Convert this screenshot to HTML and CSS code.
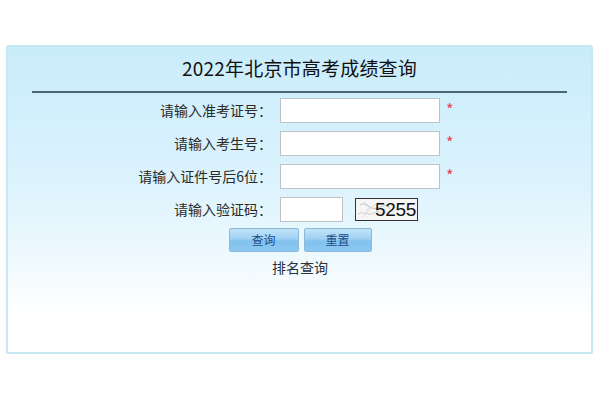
FILE: index.html
```html
<!DOCTYPE html>
<html lang="zh-CN">
<head>
<meta charset="utf-8">
<title>2022年北京市高考成绩查询</title>
<link rel="stylesheet" href="styles.css">
</head>
<body>
<div class="panel">
  <h1 class="title">2022年北京市高考成绩查询</h1>
  <div class="rule"></div>
  <form class="form">
    <div class="row">
      <label class="label">请输入准考证号：</label>
      <input class="field" type="text">
      <span class="star">*</span>
    </div>
    <div class="row">
      <label class="label">请输入考生号：</label>
      <input class="field" type="text">
      <span class="star">*</span>
    </div>
    <div class="row">
      <label class="label">请输入证件号后6位：</label>
      <input class="field" type="text">
      <span class="star">*</span>
    </div>
    <div class="row">
      <label class="label">请输入验证码：</label>
      <input class="field small" type="text">
      <div class="captcha">
        <svg class="noise" width="61" height="21" viewBox="0 0 61 21">
          <path d="M4 6 C10 2, 14 12, 22 9 S30 4, 34 10" fill="none" stroke="#c4c4c4" stroke-width="1"/>
          <path d="M2 15 C8 11, 12 18, 18 14 S26 17, 30 13" fill="none" stroke="#d0d0d0" stroke-width="1"/>
          <path d="M6 18 C12 13, 18 5, 24 3" fill="none" stroke="#d8d8d8" stroke-width="1"/>
          <path d="M8 3 L14 8 L10 12" fill="none" stroke="#c8c8c8" stroke-width="0.8"/>
        </svg>
        <span class="code">5255</span>
      </div>
    </div>
    <div class="buttons">
      <button class="btn" type="button">查询</button>
      <button class="btn narrow" type="button">重置</button>
    </div>
    <div class="rank"><a class="rank-link" href="#">排名查询</a></div>
  </form>
</div>
</body>
</html>
```
FILE: styles.css
```css
html, body {
  margin: 0;
  padding: 0;
  background: #ffffff;
}
body {
  font-family: "Noto Sans CJK SC", "Liberation Sans", sans-serif;
  color: #2a2a2a;
}
.panel {
  box-sizing: border-box;
  margin: 45px 0 0 6px;
  width: 587px;
  height: 309px;
  border: 2px solid #c6e9f1;
  border-radius: 3px;
  background: linear-gradient(to bottom, #c9ecfb 0%, #dcf3fd 45%, #f1fafe 72%, #ffffff 88%, #ffffff 100%);
  box-shadow: 0 1px 1px rgba(150, 210, 225, 0.5);
}
.title {
  margin: 9px 0 0 0;
  font-size: 19px;
  line-height: 24px;
  font-weight: normal;
  text-align: center;
  color: #111;
  letter-spacing: 0.2px;
}
.rule {
  margin: 11px 24px 0 24px;
  height: 2px;
  background: #4b6472;
}
.form {
  margin: 5px 0 0 0;
}
.row {
  display: flex;
  align-items: center;
  height: 25px;
  margin-bottom: 8px;
}
.label {
  width: 264px;
  text-align: right;
  font-size: 14px;
  line-height: 25px;
  color: #2a2a2a;
  margin-right: 8px;
}
.field {
  box-sizing: border-box;
  width: 160px;
  height: 25px;
  margin: 0;
  padding: 0 3px;
  border: 1px solid #bcc2c6;
  background: #ffffff;
  font-size: 13px;
  outline: none;
}
.field.small {
  width: 63px;
}
.star {
  align-self: flex-start;
  margin-left: 6px;
  margin-top: 3px;
  color: #e8424a;
  font-size: 16px;
  line-height: 16px;
}
.captcha {
  position: relative;
  box-sizing: border-box;
  margin-left: 12px;
  width: 63px;
  height: 23px;
  border: 1px solid #333;
  background: #f6f6f6;
  display: flex;
  align-items: center;
  justify-content: flex-end;
  overflow: hidden;
}
.noise {
  position: absolute;
  left: 0;
  top: 0;
}
.code {
  position: relative;
  font-family: "Liberation Sans", sans-serif;
  font-size: 19px;
  line-height: 21px;
  color: #111;
  letter-spacing: -0.3px;
  padding-right: 1px;
}
.buttons {
  display: flex;
  justify-content: center;
  gap: 5px;
  margin-top: -2px;
  padding-left: 1px;
}
.btn {
  box-sizing: border-box;
  width: 70px;
  height: 24px;
  margin: 0;
  padding: 0;
  border: 1px solid #8ab9da;
  border-radius: 2px;
  background: linear-gradient(to bottom, #c2e3f9 0%, #9fd0f3 45%, #82c2ee 55%, #8cc8f0 100%);
  color: #1e4c8a;
  font-family: "Noto Sans CJK SC", sans-serif;
  font-size: 12px;
  line-height: 22px;
}
.btn.narrow {
  width: 68px;
}
.rank {
  text-align: center;
  margin-top: 2px;
  padding-left: 1px;
}
.rank-link {
  font-size: 14px;
  line-height: 20px;
  color: #2a3340;
  text-decoration: none;
}
```
